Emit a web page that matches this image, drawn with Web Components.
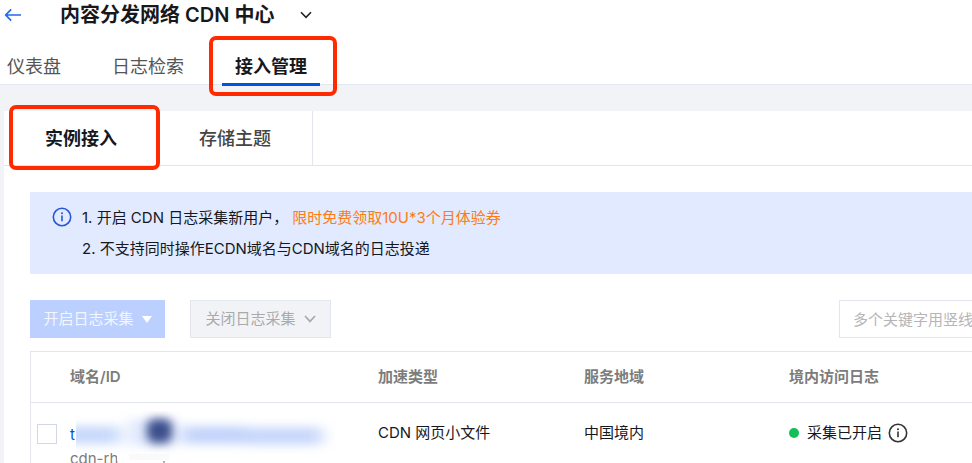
<!DOCTYPE html>
<html lang="zh-CN">
<head>
<meta charset="utf-8">
<title>内容分发网络 CDN 中心</title>
<style>
  html { overflow: hidden; }
  body {
    margin: 0; min-height: 100vh; background: #f2f3f7; color: #16181d;
    font: 15px/20px Inter, "Noto Sans CJK SC", sans-serif;
    --line: #e3e6ee; --blue: #0052e0; --muted: #7c7c7c;
  }
</style>
</head>
<body>
<cdn-header heading="内容分发网络 CDN 中心">
  <page-tab>仪表盘</page-tab>
  <page-tab>日志检索</page-tab>
  <page-tab active>接入管理</page-tab>
</cdn-header>
<content-card>
  <card-tab slot="tabs" active>实例接入</card-tab>
  <card-tab slot="tabs">存储主题</card-tab>
  <tip-banner>
    <span slot="first">1. 开启 CDN 日志采集新用户，</span>
    <span slot="offer">限时免费领取10U*3个月体验券</span>
    <span slot="second">2. 不支持同时操作ECDN域名与CDN域名的日志投递</span>
  </tip-banner>
  <action-bar></action-bar>
  <domain-table></domain-table>
</content-card>

<script>
function define(name, html) {
  const template = document.createElement('template');
  template.innerHTML = '<style>*{box-sizing:border-box}</style>' + html;
  customElements.define(name, class extends HTMLElement {
    constructor() {
      super();
      this.attachShadow({ mode: 'open' }).append(template.content.cloneNode(true));
    }
    connectedCallback() {
      const title = this.shadowRoot.querySelector('[data-heading]');
      if (title) title.textContent = this.getAttribute('heading');
    }
  });
}

define('info-icon', `
  <style>:host{display:block;width:20px;height:20px;flex:none} svg{display:block}</style>
  <svg width="20" height="20" viewBox="0 0 20 20" fill="none" stroke="currentColor" stroke-width="1.6" aria-hidden="true">
    <circle cx="10" cy="10" r="8.7"/><path d="M10 8.6v5.6"/><circle cx="10" cy="6.2" r="1" fill="currentColor" stroke="none"/>
  </svg>`);

define('cdn-header', `
  <style>
    :host{display:block;background:#fff;border-bottom:1px solid var(--line)}
    .title{display:flex;align-items:center;height:30px;padding-left:4px}
    a{display:block;width:18px;height:14px;color:#2468e8}
    svg{display:block}
    h1{margin:0 0 0 38px;font-size:20px;line-height:28px;font-weight:600}
    button{margin-left:26px;padding:0;border:0;background:none;color:#222}
    nav{display:flex;gap:51px;margin-top:18px;padding-left:7px}
  </style>
  <div class="title">
    <a href="#" aria-label="返回"><svg width="18" height="14" viewBox="0 0 18 14" fill="none" stroke="currentColor" stroke-width="1.7"><path d="M17 7H2M7.2 1.3 1.7 7l5.5 5.7"/></svg></a>
    <h1 data-heading></h1>
    <button aria-label="切换"><svg width="12" height="8" viewBox="0 0 12 8" fill="none" stroke="currentColor" stroke-width="1.6"><path d="m1 1.3 5 5 5-5"/></svg></button>
  </div>
  <nav><slot></slot></nav>`);

define('page-tab', `
  <style>
    :host{display:block;position:relative;padding-top:2px;color:#555;font-size:18px;line-height:34px}
    a{display:block;color:inherit;text-decoration:none}
    :host([active]){color:#16181d;font-weight:600}
    :host([active]) a::after{content:"";position:absolute;left:-13px;right:-13px;bottom:-2px;height:3px;background:var(--blue)}
    :host([active])::before{content:"";position:absolute;inset:-12px -30px -12px -26px;border:4px solid #ff2a00;border-radius:7px;pointer-events:none;box-sizing:border-box}
  </style>
  <a href="#"><slot></slot></a>`);

define('content-card', `
  <style>
    :host{display:block;margin:26px 0 0 4px;background:#fff}
    nav{display:flex;border-bottom:1px solid var(--line)}
    main{padding:26px 0 0 26px}
  </style>
  <nav><slot name="tabs"></slot></nav>
  <main><slot></slot></main>`);

define('card-tab', `
  <style>
    :host{display:block;position:relative;padding-top:2px;border-right:1px solid var(--line);color:#444;font-size:18px;line-height:52px;font-weight:500}
    :host([active]){color:#16181d;font-weight:600;border-right:0}
    :host([active])::before{content:"";position:absolute;inset:-6px -2px -5px 5px;border:4px solid #ff2a00;border-radius:7px;pointer-events:none;box-sizing:border-box}
    a{display:block;padding:0 41px;color:inherit;text-decoration:none}
  </style>
  <a href="#"><slot></slot></a>`);

define('tip-banner', `
  <style>
    :host{display:flex;gap:10px;padding:10px 22px;background:#e1eaff;line-height:31px}
    info-icon{color:#2456d6;margin-top:5px}
    p{margin:0;white-space:nowrap}
    a{color:#ff7a14;text-decoration:none;margin-left:4px}
  </style>
  <info-icon></info-icon>
  <div><p><slot name="first"></slot><a href="#"><slot name="offer"></slot></a></p><p><slot name="second"></slot></p></div>`);

define('action-bar', `
  <style>
    :host{display:flex;gap:25px;padding:26px 0 13px}
    button,input{font:inherit;height:38px;border:1px solid var(--line);border-radius:0;margin:0}
    button{display:flex;align-items:center;justify-content:center;gap:8px;padding:0 12px;white-space:nowrap}
    .open{width:135px;background:#bbd0ff;border-color:#bbd0ff;color:#f3f6ff}
    .close{width:141px;background:#f2f3f7;color:#aaa}
    input{width:133px;margin-left:auto;padding:0 0 0 13px;border-right:0;background:#fff;outline:0}
    input::placeholder{color:#b5b5b5;opacity:1}
  </style>
  <button class="open" disabled>开启日志采集<svg width="10" height="7" viewBox="0 0 10 7" fill="#fff"><path d="M0 0h10L5 7z"/></svg></button>
  <button class="close" disabled>关闭日志采集<svg width="12" height="8" viewBox="0 0 12 8" fill="none" stroke="currentColor" stroke-width="1.7"><path d="m1 1 5 5.4L11 1"/></svg></button>
  <input type="text" aria-label="搜索域名" placeholder="多个关键字用竖线">`);

define('domain-table', `
  <style>
    :host{display:block;border:1px solid var(--line);border-right:0;border-bottom:0}
    table{width:100%;table-layout:fixed;border-collapse:collapse}
    th,td{padding:0;text-align:left;white-space:nowrap}
    th{height:50px;color:var(--muted);font-weight:600;border-bottom:1px solid var(--line)}
    td{vertical-align:top;padding-top:20px}
    .check{width:39px}.name{width:308px}.type{width:206px}.area{width:205px}
    input{appearance:none;display:block;width:20px;height:20px;margin:1px 0 0 6px;border:1px solid #d3d8e4;background:#fff}
    .domain{position:relative;line-height:24px}
    .domain a{display:block;color:var(--blue);text-decoration:none}
    .domain small{display:block;font-size:15px;color:var(--muted)}
    .domain svg{position:absolute;left:6px;top:8px}
    .status{display:flex;align-items:center}
    .dot{width:10px;height:10px;border-radius:50%;background:#12bf5b;margin-right:8px}
    info-icon{margin-left:6px;color:#333}
  </style>
  <table>
    <thead><tr><th class="check"></th><th class="name">域名/ID</th><th class="type">加速类型</th><th class="area">服务地域</th><th>境内访问日志</th></tr></thead>
    <tbody><tr>
      <td><input type="checkbox" aria-label="选择域名"></td>
      <td class="domain"><a href="#">t</a><small>cdn-rh</small>
        <svg width="260" height="54" viewBox="0 0 260 54" aria-hidden="true">
          <defs>
            <filter id="soft" filterUnits="userSpaceOnUse" x="-40" y="-30" width="340" height="110" color-interpolation-filters="sRGB"><feGaussianBlur stdDeviation="8 5"/></filter>
            <filter id="core" filterUnits="userSpaceOnUse" x="30" y="-30" width="110" height="110" color-interpolation-filters="sRGB"><feGaussianBlur stdDeviation="5"/></filter>
          </defs>
          <path fill="#fff" d="M0 0h260v43H92v7H41v-7H38v-2H0z"/>
          <path fill="#fafafa" d="M53 43h40v6H53z"/>
          <g filter="url(#soft)">
            <rect x="-14" y="15" width="58" height="18" fill="#c8d9fb"/>
            <rect x="54" y="8" width="46" height="27" fill="#dde6fc"/>
            <rect x="106" y="15" width="62" height="18" fill="#c3d4fb"/>
            <rect x="168" y="16" width="78" height="18" fill="#c9d8fb"/>
          </g>
          <rect x="71" y="8" width="25" height="24" rx="8" fill="#3c4f8c" filter="url(#core)"/>
          <path d="M88 50v4" stroke="#888" stroke-width="1.3"/>
        </svg>
      </td>
      <td>CDN 网页小文件</td><td>中国境内</td>
      <td><div class="status"><span class="dot"></span>采集已开启<info-icon></info-icon></div></td>
    </tr></tbody>
  </table>`);
</script>
</body>
</html>
